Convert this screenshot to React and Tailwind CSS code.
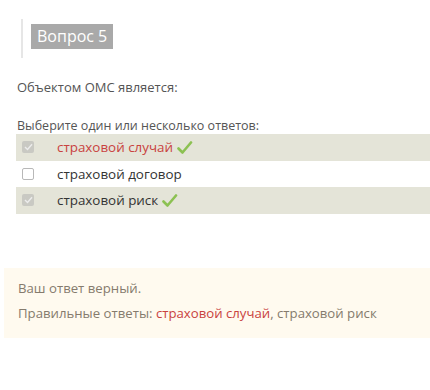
const Check = () => (
  <svg width="16" height="13" viewBox="0 0 16 13" className="ml-1 inline-block">
    <path d="M1.5 7.5 L5.5 11.5 L14 1.5" fill="none" stroke="#8cc152" strokeWidth="2.6" strokeLinecap="round" strokeLinejoin="round" />
  </svg>
);

function Box({ checked }) {
  if (checked) {
    return (
      <span className="flex h-[12px] w-[12px] items-center justify-center rounded-[2px] bg-[#c9c9c3]">
        <svg width="9" height="8" viewBox="0 0 9 8">
          <path d="M1 4 L3.5 6.5 L8 1.2" fill="none" stroke="#ececec" strokeWidth="1.4" />
        </svg>
      </span>
    );
  }
  return <span className="h-[12px] w-[12px] rounded-[2px] border border-[#b8b8b8] bg-white" />;
}

const answers = [
  { text: 'страховой случай', checked: true, red: true },
  { text: 'страховой договор', checked: false },
  { text: 'страховой риск', checked: true },
];

export default function App() {
  return (
    <div className="h-[390px] w-[430px] bg-white font-['Open_Sans',sans-serif] text-[13px] text-[#555]">
      <div className="pt-[19px] pl-[21px]">
        <div className="h-[39px] border-l-2 border-[#e6e6e6] pt-[5px] pl-[8px]">
          <span className="inline-block h-[25px] bg-[#a9a9a9] px-[6px] text-[16px] leading-[25px] text-white">
            Вопрос 5
          </span>
        </div>
      </div>
      <p className="mt-[20px] pl-[17px] leading-[18px]">Объектом ОМС является:</p>
      <p className="mt-[22px] pl-[17px] text-[12.5px] leading-[16px]">Выберите один или несколько ответов:</p>
      <div className="ml-[16px] text-[13.4px]">
        {answers.map((a, i) => (
          <div
            key={i}
            className={`flex h-[26.5px] items-center pl-[6px] ${a.checked ? 'bg-[#e4e4d8]' : 'bg-white'}`}
          >
            <Box checked={a.checked} />
            <span className={`ml-[23px] ${a.red ? 'text-[#c9423e]' : 'text-[#333]'}`}>{a.text}</span>
            {a.checked && <Check />}
          </div>
        ))}
      </div>
      <div className="mt-[54px] ml-[4px] h-[70px] bg-[#fffaef] pt-[11px] pl-[14px] text-[13.2px] text-[#857b6d]">
        <p className="leading-[18px]">Ваш ответ верный.</p>
        <p className="mt-[7px] leading-[18px]">
          Правильные ответы: <span className="text-[#c9423e]">страховой случай</span>, страховой риск
        </p>
      </div>
    </div>
  );
}
